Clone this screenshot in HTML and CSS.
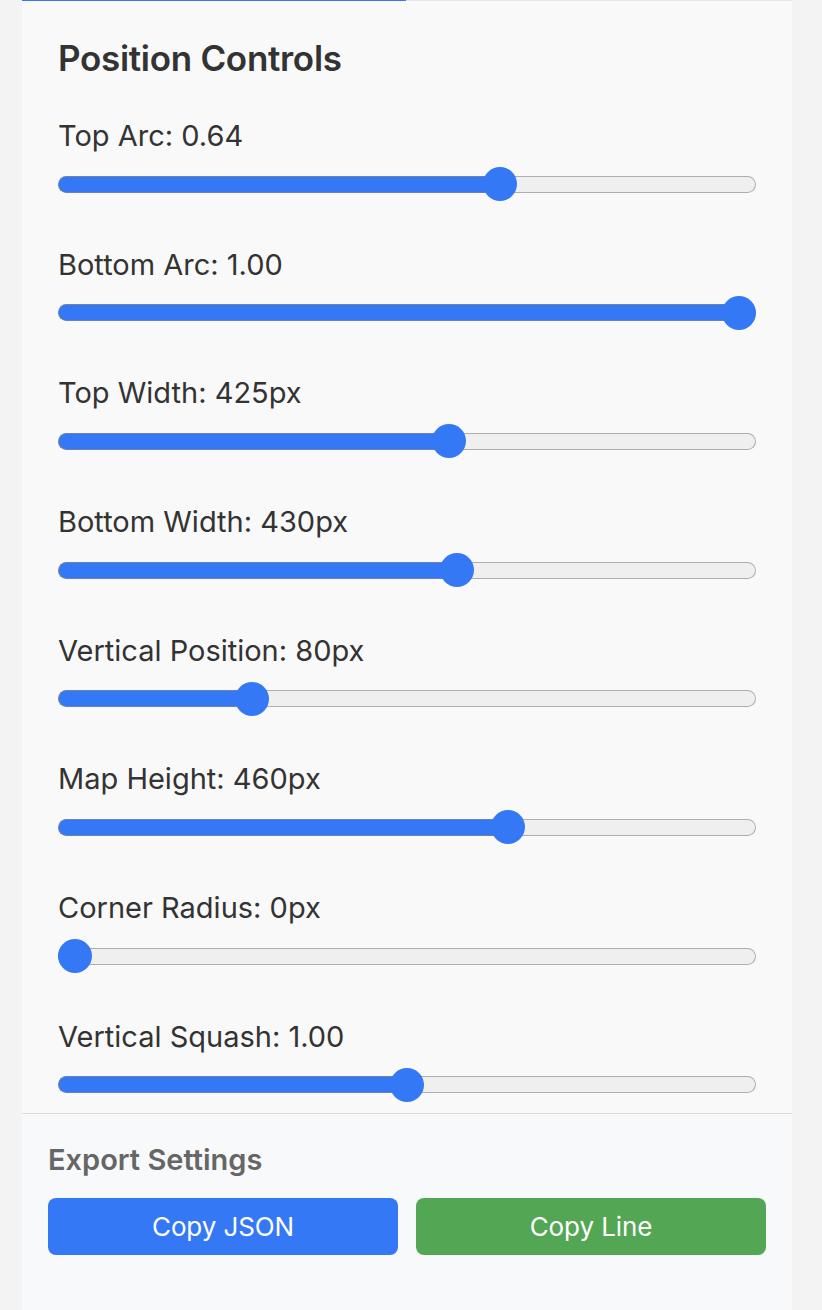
FILE: index.html
```html
<!DOCTYPE html>
<html lang="en">
<head>
<meta charset="utf-8">
<title>Position Controls</title>
<link rel="stylesheet" href="styles.css">
</head>
<body>
<div class="panel">
  <div class="tabline"><span class="tabline-active"></span><span class="tabline-rest"></span></div>
  <section class="controls">
    <h2 class="title">Position Controls</h2>

    <div class="control">
      <label class="label">Top Arc: 0.64</label>
      <div class="range"><div class="track"><div class="fill" style="width:441.96px"></div><div class="rest"></div></div><div class="thumb" style="left:424.96px"></div></div>
    </div>

    <div class="control">
      <label class="label">Bottom Arc: 1.00</label>
      <div class="range"><div class="track"><div class="fill" style="width:681px"></div><div class="rest"></div></div><div class="thumb" style="left:664px"></div></div>
    </div>

    <div class="control">
      <label class="label">Top Width: 425px</label>
      <div class="range"><div class="track"><div class="fill" style="width:390.5px"></div><div class="rest"></div></div><div class="thumb" style="left:373.5px"></div></div>
    </div>

    <div class="control">
      <label class="label">Bottom Width: 430px</label>
      <div class="range"><div class="track"><div class="fill" style="width:398.8px"></div><div class="rest"></div></div><div class="thumb" style="left:381.8px"></div></div>
    </div>

    <div class="control">
      <label class="label">Vertical Position: 80px</label>
      <div class="range"><div class="track"><div class="fill" style="width:194px"></div><div class="rest"></div></div><div class="thumb" style="left:177px"></div></div>
    </div>

    <div class="control">
      <label class="label">Map Height: 460px</label>
      <div class="range"><div class="track"><div class="fill" style="width:449.5px"></div><div class="rest"></div></div><div class="thumb" style="left:432.5px"></div></div>
    </div>

    <div class="control">
      <label class="label">Corner Radius: 0px</label>
      <div class="range"><div class="track"><div class="fill" style="width:17px"></div><div class="rest"></div></div><div class="thumb" style="left:0px"></div></div>
    </div>

    <div class="control">
      <label class="label">Vertical Squash: 1.00</label>
      <div class="range"><div class="track"><div class="fill" style="width:349px"></div><div class="rest"></div></div><div class="thumb" style="left:332px"></div></div>
    </div>
  </section>

  <section class="export">
    <h3 class="export-title">Export Settings</h3>
    <div class="buttons">
      <button class="btn btn-blue">Copy JSON</button>
      <button class="btn btn-green">Copy Line</button>
    </div>
  </section>
</div>
</body>
</html>
```

FILE: styles.css
```css
* { box-sizing: border-box; }

html, body {
  margin: 0;
  padding: 0;
  height: 100%;
}

body {
  background: #f3f3f3;
  font-family: "Inter", "Liberation Sans", sans-serif;
  color: #333333;
  -webkit-font-smoothing: antialiased;
}

.panel {
  margin: 0 30px 0 22px;
  width: 770px;
  min-height: 1310px;
  background: #f9f9f9;
  display: flex;
  flex-direction: column;
}

.tabline {
  display: flex;
  height: 1px;
}
.tabline-active {
  width: 384px;
  background: #3478f6;
}
.tabline-rest {
  flex: 1;
  background: #e6e7ec;
}

.controls {
  padding: 36px 36px 0 36px;
}

.title {
  margin: 0 0 39px 0;
  font-size: 35px;
  line-height: 42px;
  font-weight: 600;
  letter-spacing: -0.3px;
  color: #333333;
}

.control {
  margin-bottom: 45.7px;
}
.control:last-child {
  margin-bottom: 0;
}

.label {
  display: block;
  font-size: 29px;
  line-height: 36px;
  font-weight: 400;
  letter-spacing: 0;
  color: #333333;
  margin-bottom: 13px;
}

.range {
  position: relative;
  height: 34px;
  width: 698px;
  display: flex;
  align-items: center;
}

.track {
  display: flex;
  width: 100%;
  height: 17px;
}

.fill {
  height: 100%;
  background: #3478f6;
  border: 1px solid #6a82b0;
  border-right: none;
  border-radius: 9px 0 0 9px;
}

.rest {
  flex: 1;
  height: 100%;
  background: #efefef;
  border: 1.5px solid #adadad;
  border-left: none;
  border-radius: 0 9px 9px 0;
}

.thumb {
  position: absolute;
  top: 0;
  width: 34px;
  height: 34px;
  border-radius: 50%;
  background: #3478f6;
}

.export {
  margin-top: 11px;
  border-top: 1.5px solid #dcdcdc;
  background: #f8f9fa;
  flex: 1;
  padding: 28px 26px 40px 26px;
}

.export-title {
  margin: 0 0 20px 0;
  font-size: 29px;
  line-height: 36px;
  font-weight: 600;
  color: #666666;
  letter-spacing: 0;
}

.buttons {
  display: flex;
  gap: 18px;
}

.btn {
  flex: 1;
  height: 57px;
  border: none;
  border-radius: 8px;
  color: #ffffff;
  font-family: "Inter", "Liberation Sans", sans-serif;
  font-size: 26px;
  font-weight: 400;
  letter-spacing: -0.1px;
  padding: 0;
}

.btn-blue { background: #3478f6; }
.btn-green { background: #53a653; }
```
